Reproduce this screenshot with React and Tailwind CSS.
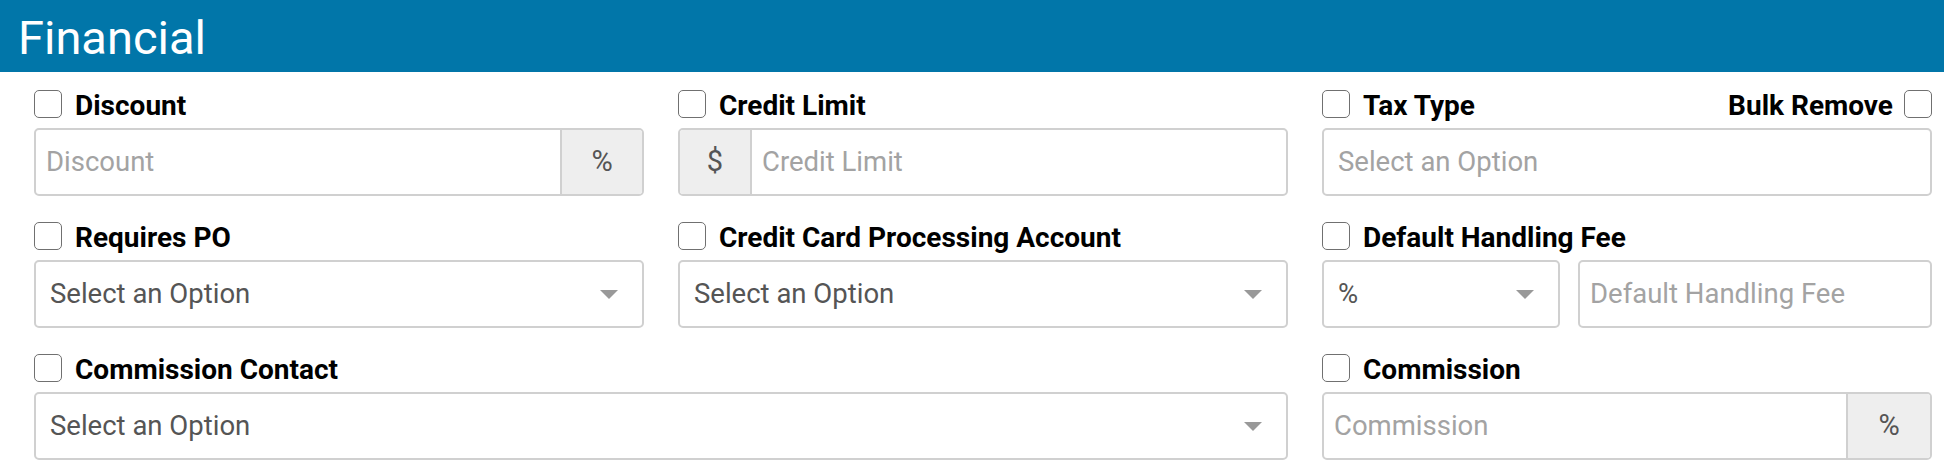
import React from 'react';

const font = "font-['Roboto','Liberation_Sans',sans-serif]";

const Check = () => (
    <input type="checkbox" className="appearance-none w-[28px] h-[28px] shrink-0 rounded-[5px] border border-[#707070] bg-white" />
);

const Caret = () => (
    <svg width="18" height="9" viewBox="0 0 18 9" className="shrink-0">
        <path d="M0 0 L18 0 L9 9 Z" fill="#999" />
    </svg>
);

const FieldLabel = ({ text, right }) => (
    <div className="flex items-center h-[28px] mb-[10px]">
        <Check />
        <span className="ml-[13px] pt-[3px] text-[28px] font-bold text-black leading-none">{text}</span>
        {right && (
            <div className="ml-auto flex items-center gap-[11px]">
                <span className="pt-[3px] text-[28px] font-bold text-black leading-none">{right}</span>
                <Check />
            </div>
        )}
    </div>
);

const Select = ({ value, placeholder, className = '', caret = true }) => (
    <div className={`flex items-center h-[68px] rounded-[5px] border-2 border-[#d0d0d0] bg-white pl-[14px] pr-[24px] ${className}`}>
        <span className={`flex-1 text-[27.5px] ${placeholder ? 'text-[#a3a3a3]' : 'text-[#555]'}`}>{value}</span>
        {caret && <Caret />}
    </div>
);

const Addon = ({ children, width, side }) => (
    <div className={`flex items-center justify-center ${width} bg-[#eeeeee] text-[29px] text-[#555] ${side === 'left' ? 'border-r-2' : 'border-l-2'} border-[#d0d0d0]`}>
        {children}
    </div>
);

const Input = ({ placeholder, addon, addonSide = 'right', addonWidth = 'w-[82px]', className = '' }) => (
    <div className={`flex h-[68px] rounded-[5px] border-2 border-[#d0d0d0] bg-white overflow-hidden ${className}`}>
        {addon && addonSide === 'left' && <Addon width={addonWidth} side="left">{addon}</Addon>}
        <div className="flex-1 flex items-center pl-[10px] text-[27.5px] text-[#a3a3a3]">{placeholder}</div>
        {addon && addonSide === 'right' && <Addon width={addonWidth} side="right">{addon}</Addon>}
    </div>
);

const Financial = () => {
    return (
        <div className={`w-[1944px] h-[470px] bg-white ${font}`}>
            {/* Header */}
            <div className="h-[72px] bg-[#0176a9] flex items-center pl-[18px] pt-[2px]">
                <h1 className="text-[47px] font-normal text-white leading-none">Financial</h1>
            </div>

            {/* Form grid */}
            <div className="grid grid-cols-3 gap-x-[34px] gap-y-[26px] pl-[34px] pr-[12px] pt-[18px]">
                <div>
                    <FieldLabel text="Discount" />
                    <Input placeholder="Discount" addon="%" />
                </div>
                <div>
                    <FieldLabel text="Credit Limit" />
                    <Input placeholder="Credit Limit" addon="$" addonSide="left" addonWidth="w-[72px]" />
                </div>
                <div>
                    <FieldLabel text="Tax Type" right="Bulk Remove" />
                    <Select value="Select an Option" placeholder caret={false} />
                </div>

                <div>
                    <FieldLabel text="Requires PO" />
                    <Select value="Select an Option" />
                </div>
                <div>
                    <FieldLabel text="Credit Card Processing Account" />
                    <Select value="Select an Option" />
                </div>
                <div>
                    <FieldLabel text="Default Handling Fee" />
                    <div className="flex gap-[18px]">
                        <Select value="%" className="w-[238px]" />
                        <Input placeholder="Default Handling Fee" className="flex-1" />
                    </div>
                </div>

                <div className="col-span-2">
                    <FieldLabel text="Commission Contact" />
                    <Select value="Select an Option" />
                </div>
                <div>
                    <FieldLabel text="Commission" />
                    <Input placeholder="Commission" addon="%" addonWidth="w-[84px]" />
                </div>
            </div>
        </div>
    );
};

export default Financial;
